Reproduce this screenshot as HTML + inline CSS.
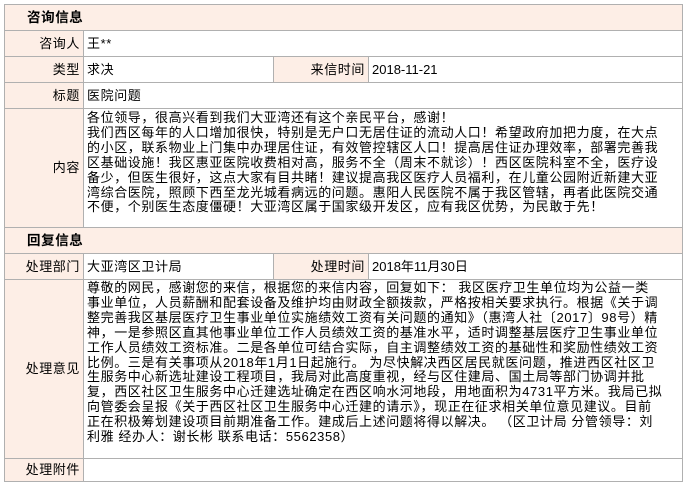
<!DOCTYPE html>
<html><head><meta charset="utf-8"><style>
*{margin:0;padding:0;box-sizing:border-box}
body{width:687px;height:485px;background:#fff;font-family:"Liberation Sans","Noto Sans CJK SC","WenQuanYi Zen Hei",sans-serif;font-size:13px;color:#000;position:relative;overflow:hidden}
.c{position:absolute;border:1px solid #b0b0b0;white-space:nowrap;letter-spacing:.6px}
.l{background:#fdeee6;text-align:right;padding-right:3px}
.v{background:#fff;padding-left:3px}
.h{background:#fdeee6;font-weight:bold;padding-left:22px;font-size:13.5px}
.m{line-height:14.9px;padding-top:2px}
</style></head><body>
<div class="c h" style="left:4px;top:4px;width:679px;height:27px;line-height:25px">咨询信息</div>
<div class="c l" style="left:4px;top:30px;width:80px;height:27px;line-height:25px">咨询人</div>
<div class="c v" style="left:83px;top:30px;width:600px;height:27px;line-height:25px">王**</div>
<div class="c l" style="left:4px;top:56px;width:80px;height:27px;line-height:25px">类型</div>
<div class="c v" style="left:83px;top:56px;width:191px;height:27px;line-height:25px">求决</div>
<div class="c l" style="left:273px;top:56px;width:96px;height:27px;line-height:25px">来信时间</div>
<div class="c v" style="left:368px;top:56px;width:315px;height:27px;line-height:25px;letter-spacing:0">2018-11-21</div>
<div class="c l" style="left:4px;top:82px;width:80px;height:27px;line-height:25px">标题</div>
<div class="c v" style="left:83px;top:82px;width:600px;height:27px;line-height:25px">医院问题</div>
<div class="c l" style="left:4px;top:108px;width:80px;height:120px;line-height:118px">内容</div>
<div class="c v m" style="left:83px;top:108px;width:600px;height:120px">各位领导，很高兴看到我们大亚湾还有这个亲民平台，感谢！<br>我们西区每年的人口增加很快，特别是无户口无居住证的流动人口！希望政府加把力度，在大点<br>的小区，联系物业上门集中办理居住证，有效管控辖区人口！提高居住证办理效率，部署完善我<br>区基础设施！我区惠亚医院收费相对高，服务不全（周末不就诊）！西区医院科室不全，医疗设<br>备少，但医生很好，这点大家有目共睹！建议提高我区医疗人员福利，在儿童公园附近新建大亚<br>湾综合医院，照顾下西至龙光城看病远的问题。惠阳人民医院不属于我区管辖，再者此医院交通<br>不便，个别医生态度僵硬！大亚湾区属于国家级开发区，应有我区优势，为民敢于先！</div>
<div class="c h" style="left:4px;top:227px;width:679px;height:27px;line-height:25px">回复信息</div>
<div class="c l" style="left:4px;top:253px;width:80px;height:27px;line-height:25px">处理部门</div>
<div class="c v" style="left:83px;top:253px;width:191px;height:27px;line-height:25px">大亚湾区卫计局</div>
<div class="c l" style="left:273px;top:253px;width:96px;height:27px;line-height:25px">处理时间</div>
<div class="c v" style="left:368px;top:253px;width:315px;height:27px;line-height:25px;letter-spacing:0">2018年11月30日</div>
<div class="c l" style="left:4px;top:279px;width:80px;height:180px;line-height:178px">处理意见</div>
<div class="c v m" style="left:83px;top:279px;width:600px;height:180px;padding-top:1px">尊敬的网民，感谢您的来信，根据您的来信内容，回复如下： 我区医疗卫生单位均为公益一类<br>事业单位，人员薪酬和配套设备及维护均由财政全额拨款，严格按相关要求执行。根据《关于调<br>整完善我区基层医疗卫生事业单位实施绩效工资有关问题的通知》（惠湾人社〔2017〕98号）精<br>神，一是参照区直其他事业单位工作人员绩效工资的基准水平，适时调整基层医疗卫生事业单位<br>工作人员绩效工资标准。二是各单位可结合实际，自主调整绩效工资的基础性和奖励性绩效工资<br>比例。三是有关事项从2018年1月1日起施行。 为尽快解决西区居民就医问题，推进西区社区卫<br>生服务中心新选址建设工程项目，我局对此高度重视，经与区住建局、国土局等部门协调并批<br>复，西区社区卫生服务中心迁建选址确定在西区响水河地段，用地面积为4731平方米。我局已拟<br>向管委会呈报《关于西区社区卫生服务中心迁建的请示》，现正在征求相关单位意见建议。目前<br>正在积极筹划建设项目前期准备工作。建成后上述问题将得以解决。 （区卫计局 分管领导：刘<br>利雅 经办人：谢长彬 联系电话：5562358）</div>
<div class="c l" style="left:4px;top:458px;width:80px;height:24px;line-height:22px">处理附件</div>
<div class="c v" style="left:83px;top:458px;width:600px;height:24px"></div>
</body></html>
